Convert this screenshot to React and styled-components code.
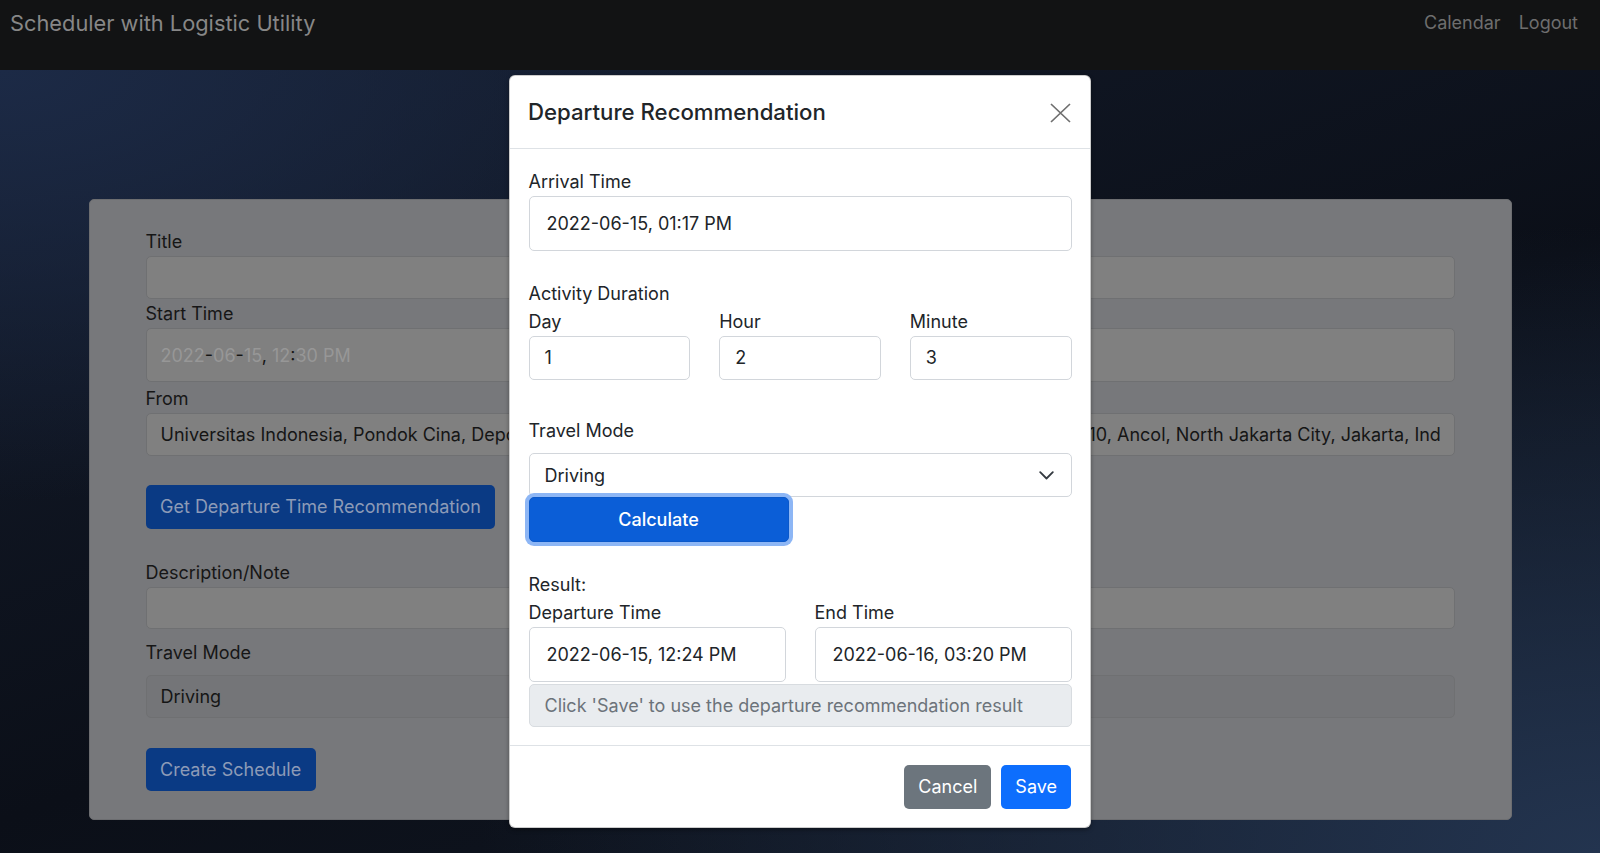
import React from "react";
import styled, { createGlobalStyle } from "styled-components";

const GlobalStyle = createGlobalStyle`
  html, body {
    margin: 0;
    padding: 0;
  }
  body {
    font-family: Inter, "Liberation Sans", Arial, sans-serif;
    background: #0d121c;
    color: #212529;
  }
  * {
    box-sizing: border-box;
  }
`;

const App = () => {
  return (
    <Page>
      <GlobalStyle />
      <NavBar>
        <Brand>Scheduler with Logistic Utility</Brand>
        <NavLinks>
          <NavLink>Calendar</NavLink>
          <NavLink>Logout</NavLink>
        </NavLinks>
      </NavBar>

      <Main>
        <Card>
          <Field $mb={1}>
            <PageLabel>Title</PageLabel>
            <PageInput />
          </Field>
          <TwoCols $mb={2.5}>
            <div>
              <PageLabel>Start Time</PageLabel>
              <PageInput $h={54}>
                <InputText>
                  <Dim>2022</Dim>-<Dim>06</Dim>-<Dim>15</Dim>,&nbsp;<Dim>12</Dim>:<Dim>30 PM</Dim>
                </InputText>
              </PageInput>
            </div>
            <div>
              <PageLabel>End Time</PageLabel>
              <PageInput $h={54} />
            </div>
          </TwoCols>
          <TwoCols>
            <div>
              <PageLabel>From</PageLabel>
              <PageInput $h={43.5}>
                <InputText>
                  Universitas Indonesia, Pondok Cina, Depok City, West Java, Indonesia
                </InputText>
              </PageInput>
            </div>
            <div>
              <PageLabel>To</PageLabel>
              <PageInput $h={43.5}>
                <InputText>
                  Taman Impian Jaya Ancol, RW.10, Ancol, North Jakarta City, Jakarta, Indonesia
                </InputText>
              </PageInput>
            </div>
          </TwoCols>
          <PageButton $mt={29}>Get Departure Time Recommendation</PageButton>
          <Field $mt={30} $mb={9.5}>
            <PageLabel>Description/Note</PageLabel>
            <PageInput $h={42.5} />
          </Field>
          <Field>
            <PageLabel $mb={8.5}>Travel Mode</PageLabel>
            <PageInput $disabled>
              <InputText>Driving</InputText>
            </PageInput>
          </Field>
          <PageButton $mt={29.5}>Create Schedule</PageButton>
        </Card>
      </Main>

      <Modal>
        <ModalHeader>
          <ModalTitle>Departure Recommendation</ModalTitle>
          <CloseButton aria-label="Close">
            <svg width="21" height="20" viewBox="0 0 21 20">
              <path d="M1 1 L20 19 M20 1 L1 19" stroke="#6f6f6f" strokeWidth="1.7" fill="none" />
            </svg>
          </CloseButton>
        </ModalHeader>

        <ModalBody>
          <Label>Arrival Time</Label>
          <Input $h={55} $pl={17}>2022-06-15, 01:17 PM</Input>

          <Label $mt={29}>Activity Duration</Label>
          <Grid $cols={3}>
            <div>
              <Label>Day</Label>
              <Input>1</Input>
            </div>
            <div>
              <Label>Hour</Label>
              <Input>2</Input>
            </div>
            <div>
              <Label>Minute</Label>
              <Input>3</Input>
            </div>
          </Grid>

          <Label $mt={37} $mb={8.5}>Travel Mode</Label>
          <Select>
            <span>Driving</span>
            <svg width="15" height="9" viewBox="0 0 15 9">
              <path d="M1.2 1.2 L7.5 7.5 L13.8 1.2" stroke="#343a40" strokeWidth="1.8" fill="none" strokeLinecap="round" strokeLinejoin="round" />
            </svg>
          </Select>
          <CalcButton>Calculate</CalcButton>

          <Label $mt={29}>Result:</Label>
          <Grid $cols={2}>
            <div>
              <Label>Departure Time</Label>
              <Input $h={55} $pl={17}>2022-06-15, 12:24 PM</Input>
            </div>
            <div>
              <Label>End Time</Label>
              <Input $h={55} $pl={17}>2022-06-16, 03:20 PM</Input>
            </div>
          </Grid>
          <InfoBox>Click 'Save' to use the departure recommendation result</InfoBox>
        </ModalBody>

        <ModalFooter>
          <FooterButton $variant="secondary">Cancel</FooterButton>
          <FooterButton>Save</FooterButton>
        </ModalFooter>
      </Modal>
    </Page>
  );
};

export default App;

const Page = styled.div`
  position: relative;
  min-height: 853px;
  overflow: hidden;
`;

const NavBar = styled.nav`
  height: 70px;
  background: #121314;
  display: flex;
  justify-content: space-between;
  align-items: flex-start;
  padding: 6px 22px 0 10px;
`;

const Brand = styled.div`
  font-size: 21.8px;
  line-height: 34px;
  color: #878787;
`;

const NavLinks = styled.div`
  display: flex;
  gap: 18px;
  padding-top: 2px;
`;

const NavLink = styled.a`
  font-size: 18px;
  line-height: 30px;
  color: #6e6e6e;
  cursor: pointer;
`;

const Main = styled.main`
  min-height: 783px;
  padding: 129px 0 33px;
  background:
    radial-gradient(ellipse 70% 80% at 100% 100%, #23344f 0%, rgba(35, 52, 79, 0) 100%),
    radial-gradient(ellipse 55% 55% at 0% 0%, #1c2a46 0%, rgba(28, 42, 70, 0) 100%),
    linear-gradient(160deg, #141c2c 0%, #0b0f18 55%, #111824 100%);
`;

const Card = styled.div`
  width: 1423px;
  margin: 0 auto;
  background: #77787b;
  border: 1px solid #6c6d70;
  border-radius: 5px;
  padding: 28px 56px;
`;

const Field = styled.div`
  margin-top: ${(p) => p.$mt || 0}px;
  margin-bottom: ${(p) => p.$mb || 0}px;
`;

const TwoCols = styled.div`
  display: grid;
  grid-template-columns: minmax(0, 1fr) minmax(0, 1fr);
  column-gap: 29px;
  margin-bottom: ${(p) => p.$mb || 0}px;
`;

const PageLabel = styled.div`
  font-size: 18px;
  line-height: 28px;
  color: #161616;
  margin-bottom: ${(p) => p.$mb || 0}px;
`;

const PageInput = styled.div`
  height: ${(p) => p.$h || 43}px;
  display: flex;
  align-items: center;
  padding: 0 14px;
  font-size: 18px;
  color: #151515;
  background: ${(p) => (p.$disabled ? "#747578" : "#808080")};
  border: 1px solid #6f7072;
  border-radius: 5px;
`;

const InputText = styled.span`
  flex: 1;
  min-width: 0;
  overflow: hidden;
  white-space: nowrap;
`;

const Dim = styled.span`
  color: #979797;
`;

const PageButton = styled.div`
  display: inline-flex;
  align-items: center;
  height: 43.5px;
  margin-top: ${(p) => p.$mt || 0}px;
  padding: 0 14.5px;
  font-size: 18px;
  color: #8d9bb7;
  background: #0a3a84;
  border-radius: 5px;
`;

const Modal = styled.div`
  position: absolute;
  top: 75px;
  left: 50%;
  transform: translateX(-50%);
  width: 582px;
  background: #ffffff;
  border: 1px solid rgba(0, 0, 0, 0.2);
  border-radius: 6px;
  box-shadow: 0 2px 4px rgba(0, 0, 0, 0.35);
`;

const ModalHeader = styled.div`
  height: 73px;
  display: flex;
  align-items: center;
  justify-content: space-between;
  padding: 0 18px;
  border-bottom: 1px solid #dee2e6;
`;

const ModalTitle = styled.h5`
  margin: 0;
  font-size: 22.2px;
  font-weight: 500;
  line-height: 34px;
  color: #212529;
`;

const CloseButton = styled.button`
  display: flex;
  align-items: center;
  justify-content: center;
  width: 24px;
  height: 24px;
  padding: 0;
  border: none;
  background: transparent;
  margin-top: 2px;
  cursor: pointer;
`;

const ModalBody = styled.div`
  padding: 18.5px;
`;

const Label = styled.div`
  font-size: 18px;
  line-height: 28px;
  color: #212529;
  margin-top: ${(p) => p.$mt || 0}px;
  margin-bottom: ${(p) => p.$mb || 0}px;
`;

const Input = styled.div`
  height: ${(p) => p.$h || 44}px;
  display: flex;
  align-items: center;
  padding-left: ${(p) => p.$pl || 15}px;
  font-size: 18px;
  color: #212529;
  background: #ffffff;
  border: 1px solid #d2d6db;
  border-radius: 5px;
  white-space: nowrap;
`;

const Grid = styled.div`
  display: grid;
  grid-template-columns: repeat(${(p) => p.$cols}, minmax(0, 1fr));
  column-gap: 29px;
`;

const Select = styled.div`
  height: 44px;
  display: flex;
  align-items: center;
  justify-content: space-between;
  padding: 0 17px 0 15px;
  font-size: 18px;
  color: #212529;
  background: #ffffff;
  border: 1px solid #d2d6db;
  border-radius: 5px;
`;

const CalcButton = styled.button`
  display: block;
  width: 260px;
  height: 44.5px;
  padding: 0;
  font-family: inherit;
  font-size: 18px;
  font-weight: 500;
  color: #ffffff;
  background: #0b5ed7;
  border: 1px solid #0a58ca;
  border-radius: 5px;
  box-shadow: 0 0 0 4px #8db6f5;
  cursor: pointer;
`;

const InfoBox = styled.div`
  height: 43px;
  margin-top: 2px;
  display: flex;
  align-items: center;
  padding-left: 15px;
  font-size: 18px;
  color: #6c737a;
  background: #e9ecef;
  border: 1px solid #d8dce0;
  border-radius: 5px;
  white-space: nowrap;
`;

const ModalFooter = styled.div`
  display: flex;
  justify-content: flex-end;
  gap: 10px;
  padding: 18.5px 19px 18px;
  border-top: 1px solid #dee2e6;
`;

const FooterButton = styled.button`
  height: 44.5px;
  padding: 0 14px;
  font-family: inherit;
  font-size: 18px;
  color: #ffffff;
  background: ${(p) => (p.$variant === "secondary" ? "#6c757d" : "#0d6efd")};
  border: none;
  border-radius: 5px;
  cursor: pointer;
`;
